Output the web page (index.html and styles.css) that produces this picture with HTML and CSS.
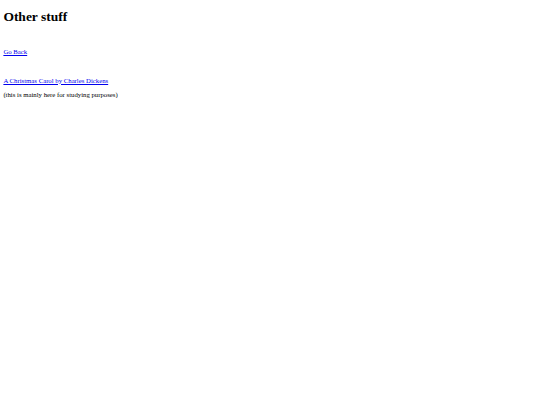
FILE: index.html
```html
<!DOCTYPE html>
<html lang="en">
<head>
<meta charset="utf-8">
<title>Other stuff</title>
<link rel="stylesheet" href="styles.css">
</head>
<body class="page">
<h1 class="title">Other stuff</h1>
<p class="back"><a class="link" href="#">Go Back</a></p>
<p class="item"><a class="link" href="#">A Christmas Carol by Charles Dickens</a></p>
<p class="note">(this is mainly here for studying purposes)</p>
</body>
</html>
```

FILE: styles.css
```css
html {
  margin: 0;
  padding: 0;
  background: #ffffff;
}

.page {
  margin: 0;
  padding: 9.05px 3.375px 0;
  font-family: "Liberation Serif", "Times New Roman", serif;
  font-size: 6.75px;
  line-height: 7.6px;
  color: #000000;
  background: #ffffff;
}

.title {
  margin: 0;
  font-size: 13.5px;
  line-height: 15.6px;
  font-weight: bold;
}

.back {
  margin: 23.4px 0 0;
}

.item {
  margin: 21.2px 0 0;
}

.note {
  margin: 6.2px 0 0;
}

.link {
  color: #0000ee;
  text-decoration: underline;
}
```
